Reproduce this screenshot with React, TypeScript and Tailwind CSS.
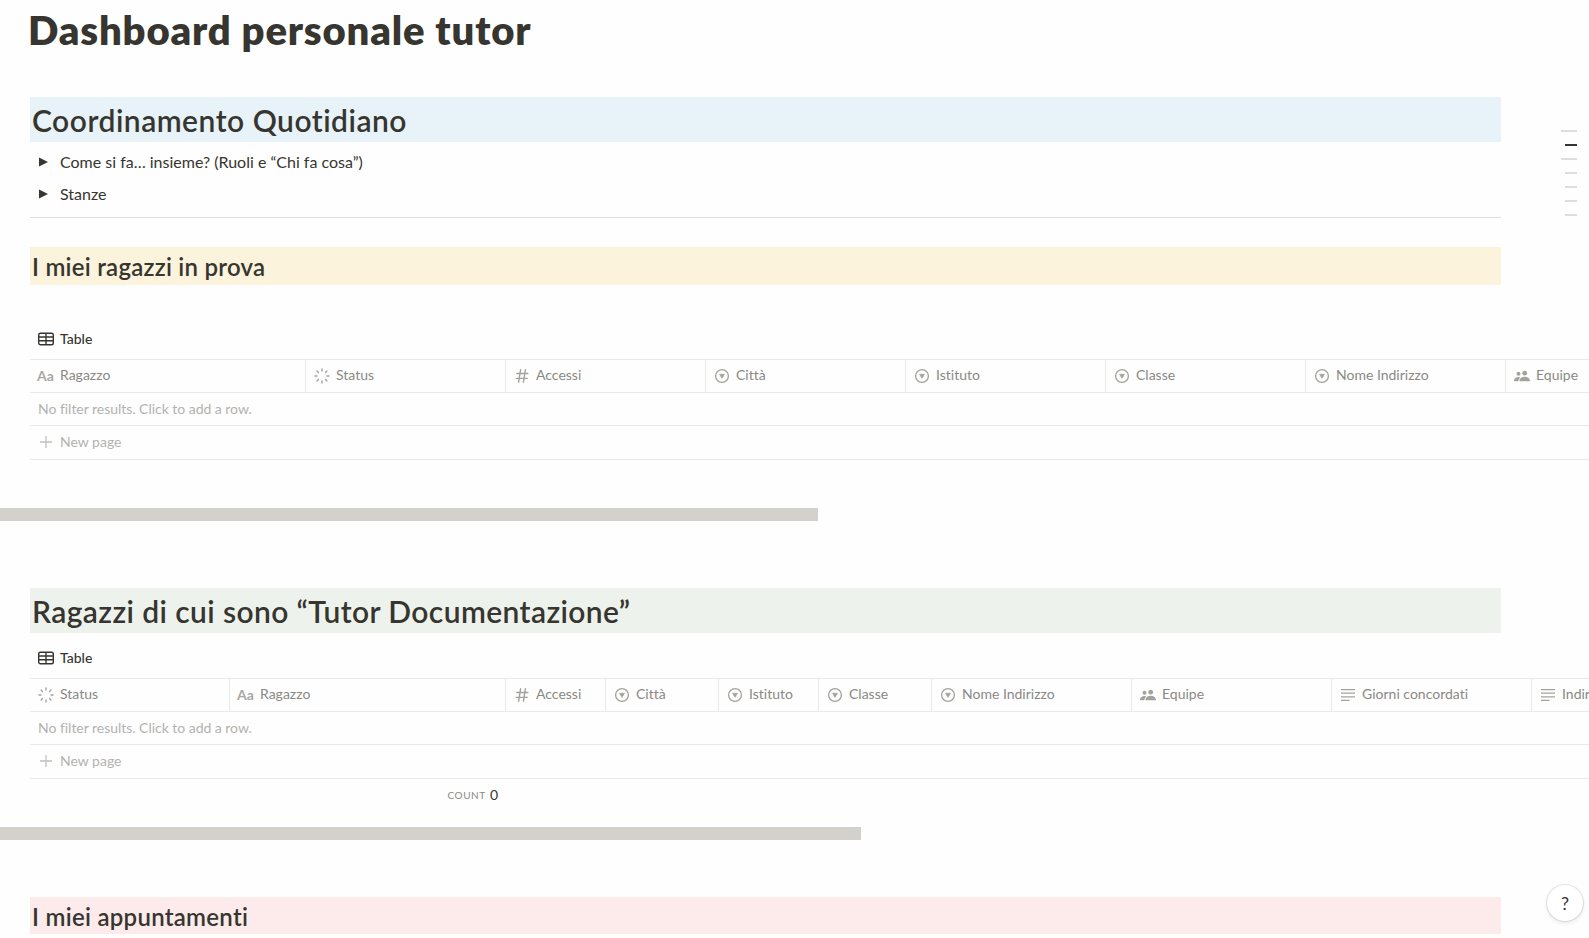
import type { ReactNode } from "react";

type ColumnKind = "title" | "status" | "number" | "select" | "person" | "text";

interface Column {
  name: string;
  kind: ColumnKind;
  width: string;
}

const TRIAL_COLUMNS: Column[] = [
  { name: "Ragazzo", kind: "title", width: "w-[276px]" },
  { name: "Status", kind: "status", width: "w-[200px]" },
  { name: "Accessi", kind: "number", width: "w-[200px]" },
  { name: "Città", kind: "select", width: "w-[200px]" },
  { name: "Istituto", kind: "select", width: "w-[200px]" },
  { name: "Classe", kind: "select", width: "w-[200px]" },
  { name: "Nome Indirizzo", kind: "select", width: "w-[200px]" },
  { name: "Equipe", kind: "person", width: "w-[200px]" },
];

const TUTOR_COLUMNS: Column[] = [
  { name: "Status", kind: "status", width: "w-[200px]" },
  { name: "Ragazzo", kind: "title", width: "w-[276px]" },
  { name: "Accessi", kind: "number", width: "w-[100px]" },
  { name: "Città", kind: "select", width: "w-[113px]" },
  { name: "Istituto", kind: "select", width: "w-[100px]" },
  { name: "Classe", kind: "select", width: "w-[113px]" },
  { name: "Nome Indirizzo", kind: "select", width: "w-[200px]" },
  { name: "Equipe", kind: "person", width: "w-[200px]" },
  { name: "Giorni concordati", kind: "text", width: "w-[200px]" },
  { name: "Indirizzo", kind: "text", width: "w-[200px]" },
];

function KindIcon({ kind }: { kind: ColumnKind }) {
  if (kind === "title") {
    return (
      <span className="-ml-px w-[17px] shrink-0 text-[14px] leading-4 font-bold text-[#a9a8a4]">Aa</span>
    );
  }

  return (
    <svg viewBox="0 0 16 16" className="h-4 w-4 shrink-0 text-[#a3a29e]" fill="none" stroke="currentColor">
      {kind === "status" && (
        <path
          strokeWidth="1.4"
          strokeLinecap="round"
          d="M8 1v2M8 13v2M1 8h2M13 8h2M3.1 3.1l1.3 1.3M11.6 11.6l1.3 1.3M3.1 12.9l1.3-1.3M11.6 4.4l1.3-1.3"
        />
      )}
      {kind === "number" && (
        <path strokeWidth="1.4" strokeLinecap="round" d="M6.6 1.8 4.6 14.2M11.4 1.8 9.4 14.2M2.8 5.5h11M2.2 10.4h11" />
      )}
      {kind === "select" && (
        <>
          <circle cx="8" cy="8" r="6.4" strokeWidth="1.3" />
          <path fill="currentColor" strokeWidth="0.6" strokeLinejoin="round" d="M5.5 6.2h5L8 10.4z" />
        </>
      )}
      {kind === "person" && (
        <g fill="currentColor" stroke="none">
          <circle cx="10.7" cy="5.2" r="2.4" />
          <circle cx="4.5" cy="5.8" r="2" />
          <path d="M6.1 13.3c-.5 0-.8-.4-.7-.9.4-2.2 2.5-3.7 5.3-3.7s4.9 1.5 5.3 3.7c.1.5-.2.9-.7.9z" />
          <path d="M.5 13.3c-.4 0-.6-.4-.5-.8.3-2 2-3.5 4.5-3.5.8 0 1.4.2 2 .5-1.3.9-2.1 2.2-2.2 3.8z" />
        </g>
      )}
      {kind === "text" && <path strokeWidth="1.2" d="M1 2.6h14M1 6.2h14M1 9.8h14M1 13.4h8.5" />}
    </svg>
  );
}

function TableIcon() {
  return (
    <svg viewBox="0 0 16 16" className="h-4 w-4 shrink-0 text-[#37352f]" fill="none" stroke="currentColor" strokeWidth="1.4">
      <rect x="0.7" y="2.2" width="14.6" height="11.6" rx="1.8" />
      <path d="M.7 6h14.6M.7 9.8h14.6M8 2.2v11.6" />
    </svg>
  );
}

function Toggle({ children }: { children: ReactNode }) {
  return (
    <div className="flex h-8 items-center text-[16px]">
      <svg viewBox="0 0 10 10" className="ml-[9px] h-[10px] w-[10px] fill-[#37352f]">
        <path d="M0 0.5 9 5 0 9.5z" />
      </svg>
      <span className="ml-[11px]">{children}</span>
    </div>
  );
}

function DatabaseView({ columns, children }: { columns: Column[]; children?: ReactNode }) {
  return (
    <div className="w-[1559px] overflow-hidden text-[14px] [font-variant-ligatures:none]">
      <div className="flex h-[39px] items-center gap-[6px] border-b border-[#e9e9e7] pb-[3px] pl-2 font-medium">
        <TableIcon />
        <span>Table</span>
      </div>
      <div className="flex h-[33px] border-b border-[#e9e9e7] text-[#8a8985]">
        {columns.map((col) => (
          <div
            key={col.name}
            className={`flex shrink-0 items-center gap-[6px] border-r border-[#e9e9e7] pl-2 whitespace-nowrap ${col.width}`}
          >
            <KindIcon kind={col.kind} />
            <span className="pb-[3px]">{col.name}</span>
          </div>
        ))}
      </div>
      <div className="flex h-[33px] items-center border-b border-[#e9e9e7] pb-[2px] pl-2 tracking-[-0.03px] text-[#b3b2af]">
        No filter results. Click to add a row.
      </div>
      <div className="flex h-[34px] items-center gap-[6px] border-b border-[#e9e9e7] pb-[2px] pl-2 text-[#b3b2af]">
        <svg viewBox="0 0 16 16" className="h-4 w-4" stroke="#c1c0bc" strokeWidth="1.3">
          <path d="M8 2v12M2 8h12" />
        </svg>
        <span>New page</span>
      </div>
      {children}
    </div>
  );
}

// Table of contents marks on the right edge; the dark one is the current section.
function Outline() {
  const marks = ["w-4", "w-3", "w-4", "w-3", "w-3", "w-3", "w-3"];
  return (
    <div className="absolute top-[130px] right-3 flex flex-col items-end gap-3">
      {marks.map((width, i) => (
        <div key={i} className={`h-[2px] ${width} ${i === 1 ? "bg-[#37352f]" : "bg-[#dededc]"}`} />
      ))}
    </div>
  );
}

export default function App() {
  return (
    <div className="relative h-[938px] w-[1589px] overflow-hidden bg-[#fefefe] font-[Lato,sans-serif] text-[#37352f]">
      <div className="pl-[30px]">
        <h1 className="-ml-[2px] h-[97px] pt-[6px] text-[40px] leading-[48px] font-extrabold tracking-[0.82px]">
          Dashboard personale tutor
        </h1>

        <h2 className="flex h-[45px] w-[1471px] items-center bg-[#e7f3f8] pt-[2px] pl-[2px] text-[30px] font-semibold tracking-[0.5px]">
          Coordinamento Quotidiano
        </h2>
        <div className="h-[76px] w-[1471px] border-b border-[#dededc] pt-[4px]">
          <Toggle>Come si fa… insieme? (Ruoli e “Chi fa cosa”)</Toggle>
          <Toggle>Stanze</Toggle>
        </div>

        <h3 className="mt-[29px] flex h-[38px] w-[1471px] items-center bg-[#fbf3db] pt-[2px] pl-[2px] text-[24px] font-semibold tracking-[0.25px]">
          I miei ragazzi in prova
        </h3>
        <div className="mt-[36px] h-[187px]">
          <DatabaseView columns={TRIAL_COLUMNS} />
        </div>
      </div>
      <div className="h-[13px] w-[818px] bg-[#d3d1cb]" />

      <div className="pt-[67px] pl-[30px]">
        <h2 className="flex h-[45px] w-[1471px] items-center bg-[#edf3ec] pt-[2px] pl-[2px] text-[30px] font-semibold tracking-[0.4px]">
          Ragazzi di cui sono “Tutor Documentazione”
        </h2>
        <div className="mt-[7px] h-[187px]">
          <DatabaseView columns={TUTOR_COLUMNS}>
            <div className="flex h-8 w-[468px] items-center justify-end gap-1 pb-px">
              <span className="pt-[2px] text-[10px] tracking-[0.6px] text-[#8a8985] uppercase">Count</span>
              <span>0</span>
            </div>
          </DatabaseView>
        </div>
      </div>
      <div className="h-[13px] w-[861px] bg-[#d3d1cb]" />

      <div className="pt-[57px] pl-[30px]">
        <h3 className="flex h-[37px] w-[1471px] items-center bg-[#fdebec] pt-[2px] pl-[2px] text-[24px] font-semibold tracking-[0.28px]">
          I miei appuntamenti
        </h3>
      </div>

      <Outline />
      <button
        aria-label="Help"
        className="absolute top-[885px] left-[1547px] flex h-9 w-9 items-center justify-center rounded-full bg-white text-[18px] shadow-[0_0_0_1px_rgba(15,15,15,0.1),0_2px_4px_rgba(15,15,15,0.1)]"
      >
        ?
      </button>
    </div>
  );
}
